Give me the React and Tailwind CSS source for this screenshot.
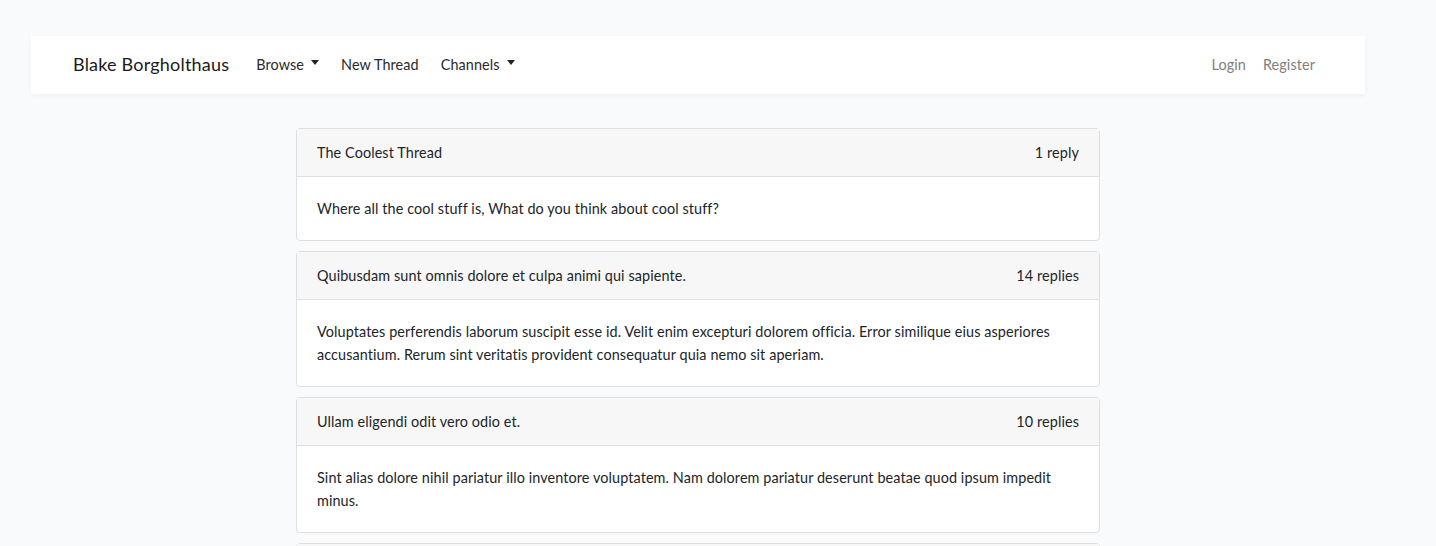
import React from "react";

const threads = [
    {
        title: "The Coolest Thread",
        replies: "1 reply",
        body: "Where all the cool stuff is, What do you think about cool stuff?",
    },
    {
        title: "Quibusdam sunt omnis dolore et culpa animi qui sapiente.",
        replies: "14 replies",
        body: "Voluptates perferendis laborum suscipit esse id. Velit enim excepturi dolorem officia. Error similique eius asperiores accusantium. Rerum sint veritatis provident consequatur quia nemo sit aperiam.",
    },
    {
        title: "Ullam eligendi odit vero odio et.",
        replies: "10 replies",
        body: "Sint alias dolore nihil pariatur illo inventore voluptatem. Nam dolorem pariatur deserunt beatae quod ipsum impedit minus.",
    },
    {
        title: "Et voluptas quia dolorem sit.",
        replies: "3 replies",
        body: "Qui doloribus at sed eveniet quo. Fugiat in et omnis quia.",
    },
];

const Caret = () => (
    <span className="ml-[7px] inline-block w-0 h-0 border-x-[4.5px] border-x-transparent border-t-[5px] border-t-[#212529] align-middle relative top-[-2px]" />
);

export default function App() {
    return (
        <div
            className="h-[546px] bg-[#f8fafc] text-[#212529] text-[14.4px] leading-[1.6] tracking-[0.1px] overflow-hidden"
            style={{ fontFamily: "Lato, 'Noto Sans', sans-serif" }}
        >
            <div className="w-[1396px] pt-[36px]">
                {/* Navbar */}
                <nav className="mx-[31px] h-[58px] bg-white shadow-[0_2px_4px_rgba(0,0,0,0.04)] flex items-center px-[42px]">
                    <a className="text-[18px] tracking-[0.2px] text-[#1a1a1a] mr-[19px] relative top-[-1px]">Blake Borgholthaus</a>
                    <ul className="flex items-center">
                        <li className="px-[8px] text-[#2a2a2a] flex items-center">
                            Browse <Caret />
                        </li>
                        <li className="px-[8px] ml-[6px] text-[#2a2a2a]">New Thread</li>
                        <li className="px-[8px] ml-[6px] text-[#2a2a2a] flex items-center">
                            Channels <Caret />
                        </li>
                    </ul>
                    <ul className="flex items-center ml-auto">
                        <li className="px-[8px] mr-[1px] text-[#808080]">Login</li>
                        <li className="px-[8px] text-[#808080]">Register</li>
                    </ul>
                </nav>

                {/* Threads */}
                <main className="w-[804px] mx-auto mt-[34px] flex flex-col gap-[10px]">
                    {threads.map((t, i) => (
                        <div key={i} className="bg-white border border-[#dfdfdf] rounded-[4px]">
                            <div className="bg-[#f7f7f7] border-b border-[#dfdfdf] px-[20px] py-[12px] flex justify-between">
                                <span>{t.title}</span>
                                <span>{t.replies}</span>
                            </div>
                            <div className="px-[20px] py-[20px]">{t.body}</div>
                        </div>
                    ))}
                </main>
            </div>
        </div>
    );
}
